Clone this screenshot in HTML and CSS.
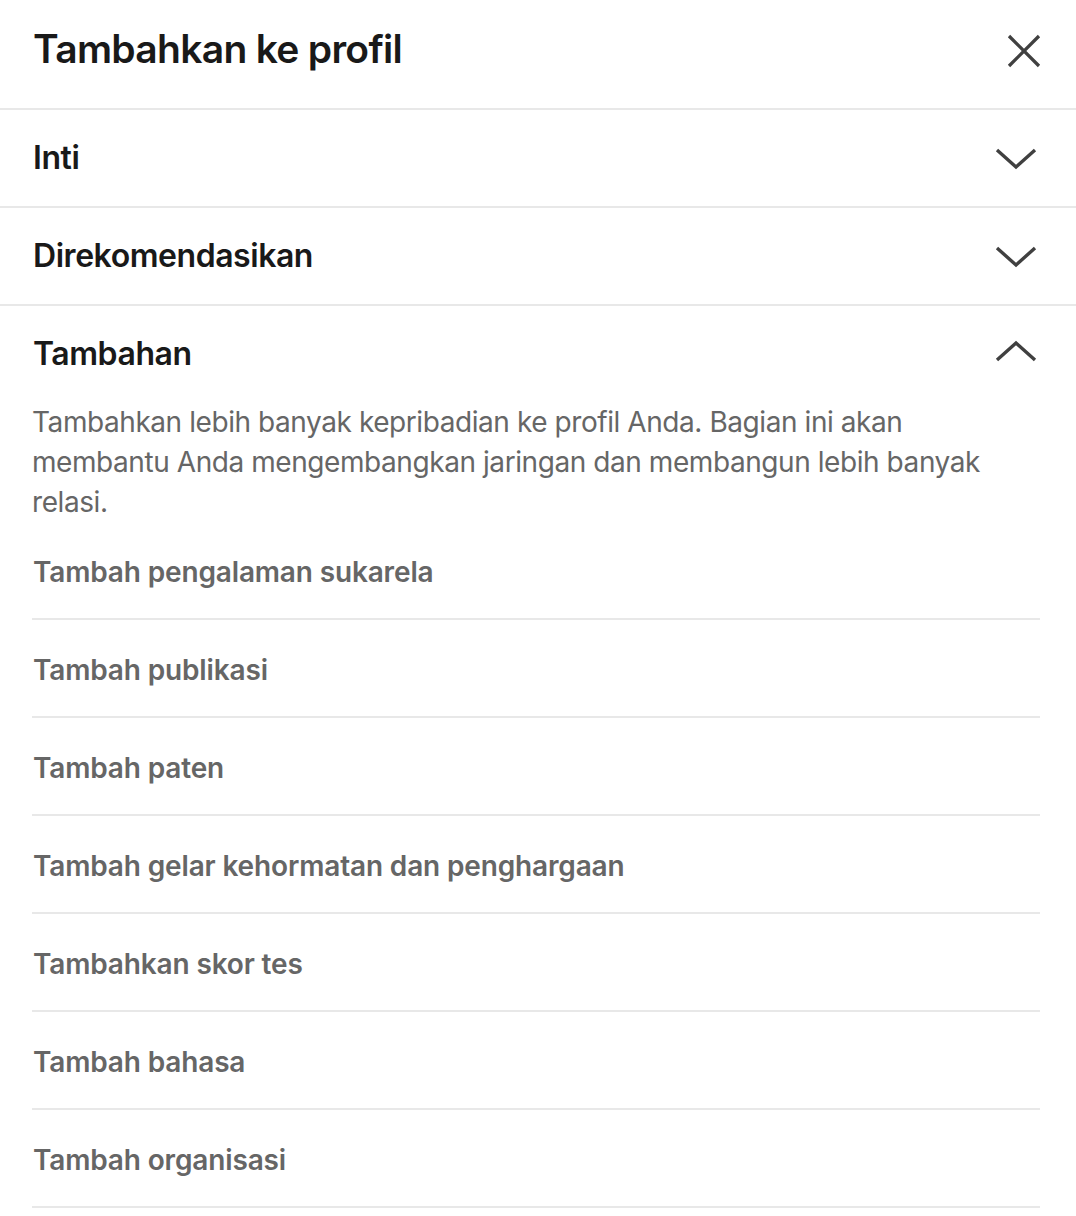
FILE: index.html
```html
<!DOCTYPE html>
<html lang="id">
<head>
<meta charset="utf-8">
<title>Tambahkan ke profil</title>
<link rel="stylesheet" href="styles.css">
</head>
<body>
<div class="modal">
  <header class="modal-header">
    <h2 class="modal-title">Tambahkan ke profil</h2>
    <button class="close-btn" aria-label="Tutup">
      <svg width="34" height="34" viewBox="0 0 34 34"><path d="M2 2 L32 32 M32 2 L2 32" fill="none" stroke="#404040" stroke-width="3.3"/></svg>
    </button>
  </header>

  <section class="section">
    <div class="section-head">
      <h3 class="section-title">Inti</h3>
      <svg class="chev" width="42" height="22" viewBox="0 0 42 22"><path d="M2 2 L21 19 L40 2" fill="none" stroke="#404040" stroke-width="3.4"/></svg>
    </div>
  </section>

  <section class="section">
    <div class="section-head">
      <h3 class="section-title">Direkomendasikan</h3>
      <svg class="chev" width="42" height="22" viewBox="0 0 42 22"><path d="M2 2 L21 19 L40 2" fill="none" stroke="#404040" stroke-width="3.4"/></svg>
    </div>
  </section>

  <section class="section open">
    <div class="section-head">
      <h3 class="section-title">Tambahan</h3>
      <svg class="chev up" width="42" height="22" viewBox="0 0 42 22"><path d="M2 20 L21 3 L40 20" fill="none" stroke="#404040" stroke-width="3.4"/></svg>
    </div>
    <div class="section-body">
      <p class="desc">Tambahkan lebih banyak kepribadian ke profil Anda. Bagian ini akan membantu Anda mengembangkan jaringan dan membangun lebih banyak relasi.</p>
      <ul class="items">
        <li class="item">Tambah pengalaman sukarela</li>
        <li class="item">Tambah publikasi</li>
        <li class="item">Tambah paten</li>
        <li class="item">Tambah gelar kehormatan dan penghargaan</li>
        <li class="item">Tambahkan skor tes</li>
        <li class="item">Tambah bahasa</li>
        <li class="item">Tambah organisasi</li>
      </ul>
    </div>
  </section>
</div>
</body>
</html>
```

FILE: styles.css
```css
html, body {
  margin: 0;
  padding: 0;
  background: #ffffff;
}

body {
  font-family: Inter, "Noto Sans", "Liberation Sans", sans-serif;
  color: #191919;
}

.modal {
  width: 1076px;
}

.modal-header {
  box-sizing: border-box;
  height: 110px;
  padding: 24px 35px 34px 33px;
  display: flex;
  align-items: center;
  justify-content: space-between;
  border-bottom: 2px solid #e8e8e8;
}

.modal-title {
  margin: 0;
  font-size: 39px;
  line-height: 50px;
  font-weight: 600;
  letter-spacing: -0.7px;
  color: #191919;
}

.close-btn {
  border: 0;
  background: none;
  padding: 0;
  margin-top: 4px;
  width: 34px;
  height: 34px;
  display: flex;
}

.section {
  border-bottom: 2px solid #e8e8e8;
}

.section.open {
  border-bottom: 0;
}

.section-head {
  height: 96px;
  padding: 0 39px 0 33px;
  display: flex;
  align-items: center;
  justify-content: space-between;
}

.section-title {
  margin: 0;
  font-size: 32px;
  line-height: 40px;
  font-weight: 600;
  letter-spacing: -0.45px;
  color: #191919;
}

.chev {
  display: block;
  margin-top: 2px;
}

.chev.up {
  margin-top: -6px;
}

.section-body {
  padding: 0 36px 0 32px;
}

.desc {
  margin: 0;
  max-width: 975px;
  font-size: 28px;
  line-height: 40px;
  font-weight: 400;
  letter-spacing: -0.43px;
  color: #666666;
}

.items {
  list-style: none;
  margin: 0;
  padding: 0;
}

.item {
  padding: 30px 0 26px 1px;
  font-size: 28px;
  line-height: 40px;
  font-weight: 600;
  letter-spacing: -0.15px;
  color: #666666;
  border-bottom: 2px solid #e8e8e8;
}
```
